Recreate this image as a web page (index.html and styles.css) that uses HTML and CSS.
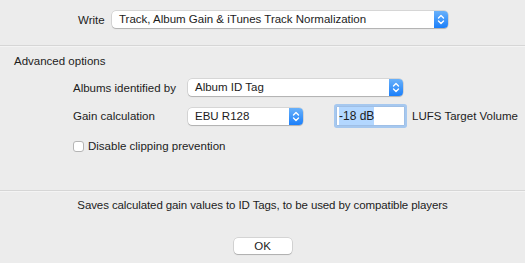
FILE: index.html
```html
<!DOCTYPE html>
<html lang="en">
<head>
    <meta charset="UTF-8">
    <title>Write Options</title>
    <link rel="stylesheet" href="styles.css">
</head>
<body>
    <div class="dialog">
        <div class="top">
            <span class="label">Write</span>
            <div class="popup popup-wide">
                <span class="popup-value">Track, Album Gain &amp; iTunes Track Normalization</span>
                <span class="popup-arrow">
                    <svg width="14" height="17" viewBox="0 0 14 17"><path d="M4.5 7 L7 4.5 L9.5 7 M4.5 10 L7 12.5 L9.5 10" fill="none" stroke="#fff" stroke-width="1.4" stroke-linecap="round" stroke-linejoin="round"/></svg>
                </span>
            </div>
        </div>

        <div class="separator"></div>

        <div class="advanced">
            <div class="section-title">Advanced options</div>

            <div class="row row-albums">
                <span class="row-label">Albums identified by</span>
                <div class="popup popup-albums">
                    <span class="popup-value">Album ID Tag</span>
                    <span class="popup-arrow">
                        <svg width="14" height="17" viewBox="0 0 14 17"><path d="M4.5 7 L7 4.5 L9.5 7 M4.5 10 L7 12.5 L9.5 10" fill="none" stroke="#fff" stroke-width="1.4" stroke-linecap="round" stroke-linejoin="round"/></svg>
                    </span>
                </div>
            </div>

            <div class="row row-gain">
                <span class="row-label">Gain calculation</span>
                <div class="popup popup-gain">
                    <span class="popup-value">EBU R128</span>
                    <span class="popup-arrow">
                        <svg width="14" height="17" viewBox="0 0 14 17"><path d="M4.5 7 L7 4.5 L9.5 7 M4.5 10 L7 12.5 L9.5 10" fill="none" stroke="#fff" stroke-width="1.4" stroke-linecap="round" stroke-linejoin="round"/></svg>
                    </span>
                </div>
                <div class="field"><span class="selected">-18 dB</span></div>
                <span class="field-unit">LUFS Target Volume</span>
            </div>

            <div class="row row-check">
                <span class="checkbox"></span>
                <span>Disable clipping prevention</span>
            </div>
        </div>

        <div class="separator"></div>

        <div class="footer">
            <p class="hint">Saves calculated gain values to ID Tags, to be used by compatible players</p>
            <button class="ok-btn">OK</button>
        </div>
    </div>
</body>
</html>
```

FILE: styles.css
```css
body {
    margin: 0;
    background-color: #ececec;
    font-family: "Liberation Sans", Arial, sans-serif;
    font-size: 11.5px;
    color: #1c1c1c;
}
.dialog {
    height: 263px;
    display: flex;
    flex-direction: column;
}
.top {
    height: 45px;
    box-sizing: border-box;
    padding: 11px 0 0 78px;
    display: flex;
    align-items: flex-start;
    gap: 9px;
}
.label {
    line-height: 18px;
    width: 25px;
    flex-shrink: 0;
}
.popup {
    display: flex;
    flex-shrink: 0;
    height: 17px;
    background: #fff;
    border-radius: 4px;
    box-shadow: 0 0 0 0.5px rgba(0, 0, 0, 0.18), 0 1px 1px rgba(0, 0, 0, 0.18);
}
.popup-value {
    flex: 1;
    padding-left: 7px;
    line-height: 17px;
    white-space: nowrap;
    overflow: hidden;
}
.popup-arrow {
    width: 14px;
    border-radius: 0 4px 4px 0;
    background: linear-gradient(#69b1fa, #1b7ffa);
    display: flex;
}
.popup-wide {
    width: 336px;
}
.popup-albums {
    width: 215px;
}
.popup-gain {
    width: 115px;
}
.separator {
    height: 1px;
    background: #d6d6d6;
    border-bottom: 1px solid #f4f4f4;
}
.advanced {
    height: 143px;
    padding-top: 7px;
    box-sizing: border-box;
}
.section-title {
    padding-left: 14px;
    line-height: 15px;
}
.row {
    display: flex;
    align-items: center;
    padding-left: 73px;
    white-space: nowrap;
}
.row-label {
    width: 115px;
    flex-shrink: 0;
}
.row-albums {
    margin-top: 10px;
    height: 17px;
}
.row-gain {
    margin-top: 9px;
    height: 22px;
}
.field {
    flex-shrink: 0;
    margin-left: 33px;
    width: 65px;
    height: 18px;
    padding-left: 2px;
    background: #fff;
    border: 1px solid #9fbfe6;
    box-shadow: 0 0 0 2px #a6c8ef;
    border-radius: 1px;
    line-height: 18px;
    font-size: 12px;
}
.selected {
    background: #b3d7ff;
    padding: 2px 0;
}
.field-unit {
    margin-left: 7px;
}
.row-check {
    margin-top: 13px;
    height: 12px;
    gap: 4px;
}
.checkbox {
    width: 11px;
    height: 11px;
    background: #fff;
    border: 1px solid #b5b5b5;
    border-radius: 3px;
    box-sizing: border-box;
}
.footer {
    flex: 1;
    display: flex;
    flex-direction: column;
    align-items: center;
}
.hint {
    margin: 6px 0 0;
    line-height: 15px;
    letter-spacing: -0.1px;
}
.ok-btn {
    margin-top: 25px;
    width: 58px;
    height: 16px;
    padding: 0;
    background: #fff;
    border: none;
    border-radius: 4px;
    box-shadow: 0 0 0 0.5px rgba(0, 0, 0, 0.2), 0 1px 1px rgba(0, 0, 0, 0.18);
    font-family: "Liberation Sans", Arial, sans-serif;
    font-size: 11.5px;
    color: #1c1c1c;
    line-height: 16px;
}
```
